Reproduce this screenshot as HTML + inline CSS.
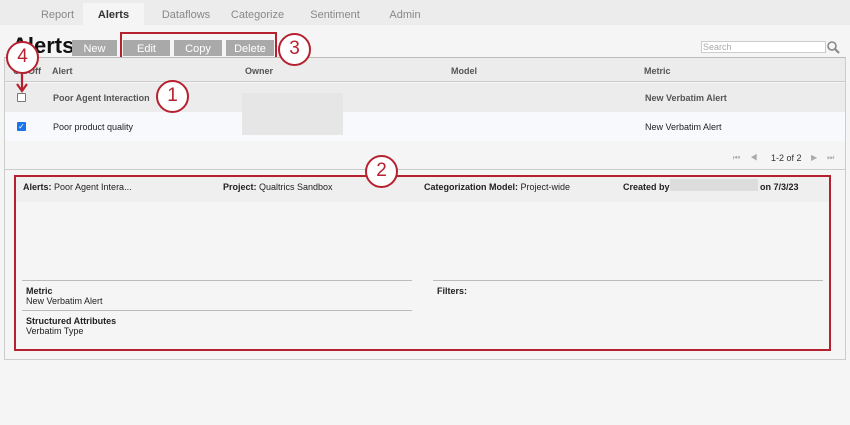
<!DOCTYPE html>
<html><head><style>
*{margin:0;padding:0;box-sizing:border-box}
body{width:850px;height:425px;background:#f5f5f5;font-family:"Liberation Sans",sans-serif;position:relative;overflow:hidden;color:#333}
.a{position:absolute}
.tab{position:absolute;top:0;height:25px;line-height:30px;font-size:11px;color:#888;text-align:center}
.btn{position:absolute;top:40px;height:16px;background:#a9a9a9;color:#fff;font-size:11px;display:flex;align-items:center;justify-content:center;padding-top:2px}
.c{position:absolute;width:33px;height:33px;border:2.5px solid #b5212f;border-radius:50%;background:#fff;color:#b5212f;font-size:19px;text-align:center;line-height:28px}
.t{font-size:9px;color:#222}
b{font-weight:bold}
</style></head><body>
<div class="a" style="left:0;top:0;width:850px;height:25px;background:#ececec"></div>
<div class="a" style="left:83px;top:3px;width:61px;height:22px;background:#f5f5f5"></div>
<div class="tab" style="left:30px;width:55px">Report</div>
<div class="tab" style="left:83px;width:61px;color:#333;font-weight:bold">Alerts</div>
<div class="tab" style="left:150px;width:72px">Dataflows</div>
<div class="tab" style="left:225px;width:65px">Categorize</div>
<div class="tab" style="left:305px;width:60px">Sentiment</div>
<div class="tab" style="left:380px;width:50px">Admin</div>
<div class="a" style="left:12px;top:33px;font-size:22px;font-weight:bold;color:#111">Alerts</div>
<div class="btn" style="left:72px;width:45px">New</div>
<div class="btn" style="left:123px;width:47px">Edit</div>
<div class="btn" style="left:174px;width:48px">Copy</div>
<div class="btn" style="left:226px;width:48px">Delete</div>
<div class="a" style="left:120px;top:32px;width:157px;height:31px;border:2.5px solid #b5212f"></div>
<div class="a" style="left:701px;top:41px;width:125px;height:12px;background:#fff;border:1px solid #ccc;font-size:9px;color:#aaa;padding-left:1px;line-height:10px">Search</div>
<svg class="a" style="left:826px;top:40px" width="14" height="14"><circle cx="6" cy="6" r="4" fill="none" stroke="#888" stroke-width="1.6"/><line x1="9" y1="9" x2="13" y2="13" stroke="#888" stroke-width="2"/></svg>
<div class="a" style="left:4px;top:57px;width:842px;height:303px;border:1px solid #ccc;border-top:1px solid #bbb"></div>
<div class="a" style="left:5px;top:58px;width:840px;height:24px;background:#ececec;border-bottom:1px solid #ccc"></div>
<div class="a t" style="left:13px;top:66px;color:#555;font-weight:bold">On/Off</div>
<div class="a t" style="left:52px;top:66px;color:#555;font-weight:bold">Alert</div>
<div class="a t" style="left:245px;top:66px;color:#555;font-weight:bold">Owner</div>
<div class="a t" style="left:451px;top:66px;color:#555;font-weight:bold">Model</div>
<div class="a t" style="left:644px;top:66px;color:#555;font-weight:bold">Metric</div>
<div class="a" style="left:5px;top:83px;width:840px;height:29px;background:#ececec"></div>
<div class="a" style="left:5px;top:112px;width:840px;height:29px;background:#f8f9fc"></div>
<div class="a" style="left:17px;top:93px;width:9px;height:9px;border:1px solid #777;background:#fff;border-radius:1px"></div>
<div class="a" style="left:17px;top:122px;width:9px;height:9px;background:#1a73e8;border-radius:1px;color:#fff;font-size:8px;line-height:9px;text-align:center">✓</div>
<div class="a t" style="left:53px;top:93px;color:#555;font-weight:bold">Poor Agent Interaction</div>
<div class="a t" style="left:53px;top:122px">Poor product quality</div>
<div class="a" style="left:242px;top:93px;width:101px;height:42px;background:#e6e6e6"></div>
<div class="a t" style="left:645px;top:93px;color:#555;font-weight:bold">New Verbatim Alert</div>
<div class="a t" style="left:645px;top:122px">New Verbatim Alert</div>
<div class="a" style="left:733px;top:153px;font-size:8px;color:#aaa;letter-spacing:10px">⏮◀</div>
<div class="a t" style="left:771px;top:153px;color:#333">1-2 of 2</div>
<div class="a" style="left:811px;top:153px;font-size:8px;color:#aaa;letter-spacing:10px">▶⏭</div>
<div class="a" style="left:5px;top:169px;width:840px;height:1px;background:#ccc"></div>
<div class="a" style="left:15px;top:177px;width:814px;height:25px;background:#efefef"></div>
<div class="a" style="left:14px;top:175px;width:817px;height:176px;border:2.5px solid #b5212f"></div>
<div class="a t" style="left:23px;top:182px"><b>Alerts:</b> Poor Agent Intera...</div>
<div class="a t" style="left:223px;top:182px"><b>Project:</b> Qualtrics Sandbox</div>
<div class="a t" style="left:424px;top:182px"><b>Categorization Model:</b> Project-wide</div>
<div class="a t" style="left:623px;top:182px"><b>Created by</b></div>
<div class="a" style="left:670px;top:179px;width:88px;height:12px;background:#ddd"></div>
<div class="a t" style="left:760px;top:182px"><b>on 7/3/23</b></div>
<div class="a" style="left:22px;top:280px;width:390px;height:1px;background:#bbb"></div>
<div class="a" style="left:433px;top:280px;width:390px;height:1px;background:#bbb"></div>
<div class="a" style="left:22px;top:310px;width:390px;height:1px;background:#bbb"></div>
<div class="a t" style="left:26px;top:286px"><b>Metric</b><br>New Verbatim Alert</div>
<div class="a t" style="left:437px;top:286px"><b>Filters:</b></div>
<div class="a t" style="left:26px;top:316px"><b>Structured Attributes</b><br>Verbatim Type</div>
<div class="c" style="left:6px;top:41px">4</div>
<svg class="a" style="left:15px;top:73px" width="14" height="20"><line x1="7" y1="0" x2="7" y2="16" stroke="#b5212f" stroke-width="2.2"/><path d="M2 11 L7 18 L12 11" fill="none" stroke="#b5212f" stroke-width="2.2"/></svg>
<div class="c" style="left:156px;top:80px">1</div>
<div class="c" style="left:278px;top:33px">3</div>
<div class="c" style="left:365px;top:155px">2</div>
</body></html>
